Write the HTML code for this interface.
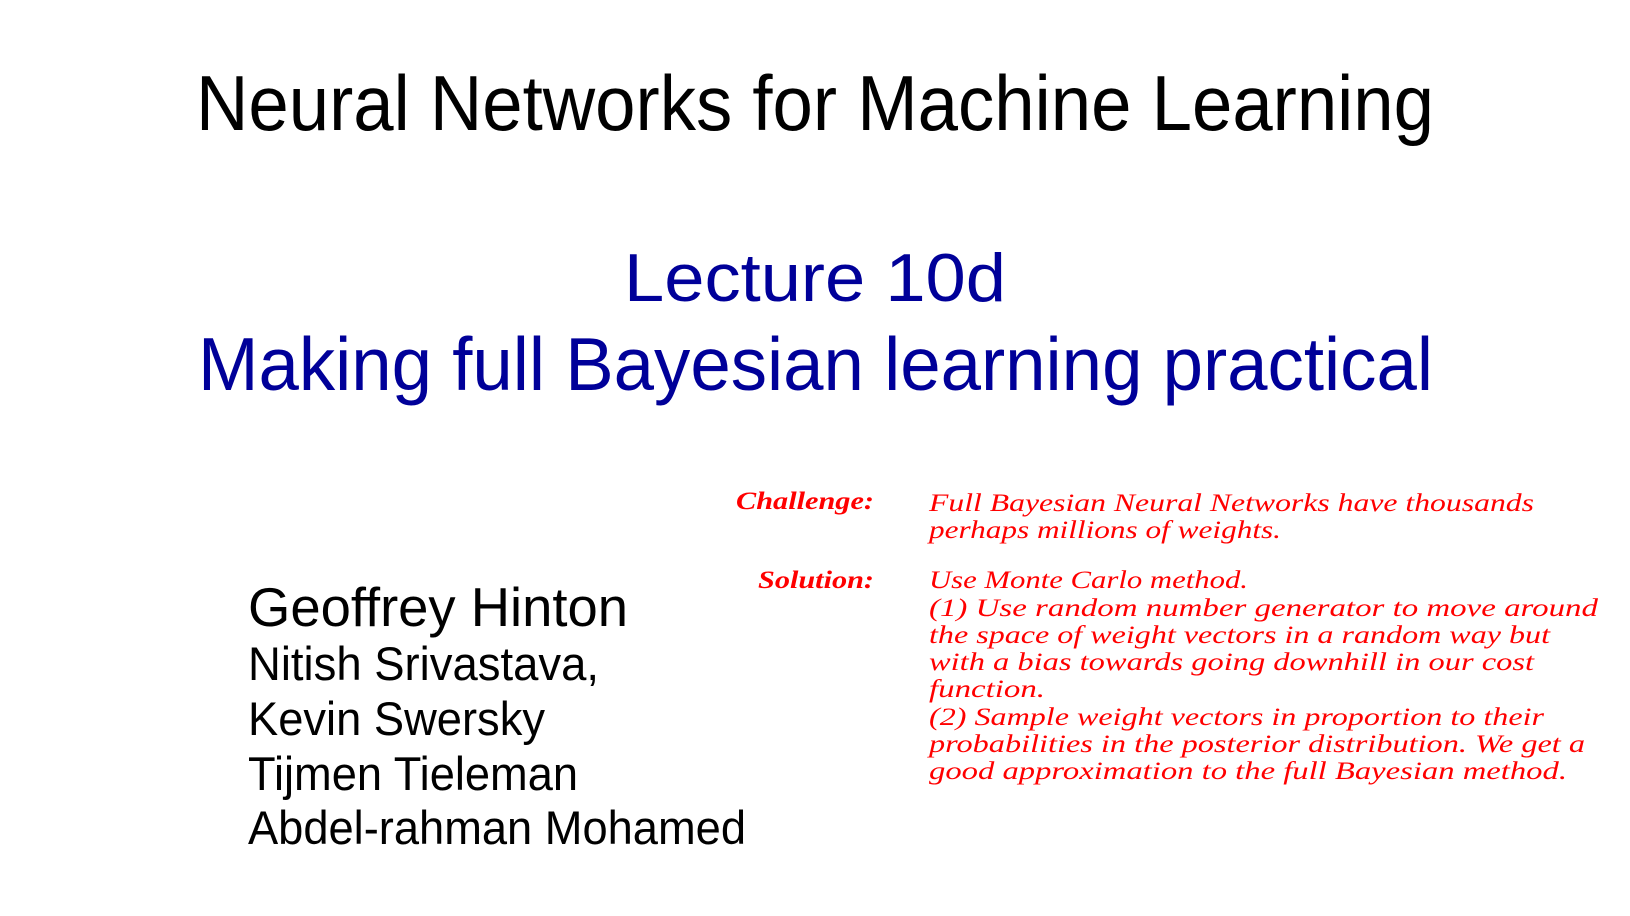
<!DOCTYPE html>
<html><head><meta charset="utf-8"><style>
html,body{margin:0;padding:0;background:#fff;width:1630px;height:916px;overflow:hidden}
svg{display:block}
.s{font-family:"Liberation Sans",Arial,sans-serif}
.r{font-family:"Liberation Serif",serif;font-style:italic;fill:#ff0000;font-size:25px}
</style></head><body>
<svg width="1630" height="916" viewBox="0 0 1630 916" xmlns="http://www.w3.org/2000/svg">
<g transform="translate(-3,-4)">
<g class="s">
<text x="199" y="134" font-size="78" fill="#000" textLength="1238" lengthAdjust="spacingAndGlyphs">Neural Networks for Machine Learning</text>
<text x="627" y="305" font-size="68" fill="#000099" textLength="382" lengthAdjust="spacingAndGlyphs">Lecture 10d</text>
<text x="201" y="394" font-size="75" fill="#000099" textLength="1235" lengthAdjust="spacingAndGlyphs">Making full Bayesian learning practical</text>
<text x="251" y="630" font-size="55" fill="#000" textLength="380" lengthAdjust="spacingAndGlyphs">Geoffrey Hinton</text>
<text x="251" y="684" font-size="47" fill="#000" textLength="351" lengthAdjust="spacingAndGlyphs">Nitish Srivastava,</text>
<text x="251" y="739" font-size="47" fill="#000" textLength="297" lengthAdjust="spacingAndGlyphs">Kevin Swersky</text>
<text x="251" y="794" font-size="47" fill="#000" textLength="330" lengthAdjust="spacingAndGlyphs">Tijmen Tieleman</text>
<text x="251" y="848" font-size="47" fill="#000" textLength="498" lengthAdjust="spacingAndGlyphs">Abdel-rahman Mohamed</text>
</g>
<g class="r" transform="translate(-3,1)">
<text x="742" y="512" font-weight="bold" textLength="138" lengthAdjust="spacingAndGlyphs">Challenge:</text>
<text x="764" y="591" font-weight="bold" textLength="116" lengthAdjust="spacingAndGlyphs">Solution:</text>
<text x="935" y="514" textLength="605" lengthAdjust="spacingAndGlyphs">Full Bayesian Neural Networks have thousands</text>
<text x="935" y="541" textLength="352" lengthAdjust="spacingAndGlyphs">perhaps millions of weights.</text>
<text x="935" y="591" textLength="319" lengthAdjust="spacingAndGlyphs">Use Monte Carlo method.</text>
<text x="935" y="619" textLength="669" lengthAdjust="spacingAndGlyphs">(1) Use random number generator to move around</text>
<text x="935" y="646" textLength="621" lengthAdjust="spacingAndGlyphs">the space of weight vectors in a random way but</text>
<text x="935" y="673" textLength="605" lengthAdjust="spacingAndGlyphs">with a bias towards going downhill in our cost</text>
<text x="935" y="700" textLength="116" lengthAdjust="spacingAndGlyphs">function.</text>
<text x="935" y="728" textLength="615" lengthAdjust="spacingAndGlyphs">(2) Sample weight vectors in proportion to their</text>
<text x="935" y="755" textLength="656" lengthAdjust="spacingAndGlyphs">probabilities in the posterior distribution. We get a</text>
<text x="935" y="782" textLength="638" lengthAdjust="spacingAndGlyphs">good approximation to the full Bayesian method.</text>
</g>
</g>
</svg>
</body></html>
